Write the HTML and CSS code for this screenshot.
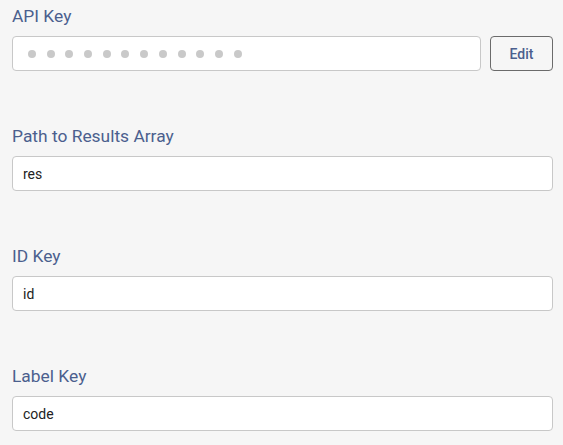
FILE: index.html
```html
<!DOCTYPE html>
<html>
<head>
<meta charset="utf-8">
<link rel="stylesheet" href="styles.css">
</head>
<body>
<div class="form">
  <div class="field">
    <label class="label">API Key</label>
    <div class="row">
      <div class="input masked">
        <span class="dot"></span><span class="dot"></span><span class="dot"></span><span class="dot"></span><span class="dot"></span><span class="dot"></span><span class="dot"></span><span class="dot"></span><span class="dot"></span><span class="dot"></span><span class="dot"></span><span class="dot"></span>
      </div>
      <button class="btn">Edit</button>
    </div>
  </div>
  <div class="field">
    <label class="label">Path to Results Array</label>
    <div class="input">res</div>
  </div>
  <div class="field">
    <label class="label">ID Key</label>
    <div class="input">id</div>
  </div>
  <div class="field">
    <label class="label">Label Key</label>
    <div class="input">code</div>
  </div>
</div>
</body>
</html>
```
FILE: styles.css
```css
html, body {
  margin: 0;
  padding: 0;
  background: #f6f6f6;
}
body {
  font-family: Roboto, "Liberation Sans", sans-serif;
}
.form {
  padding: 4px 10px 0 12px;
  display: flex;
  flex-direction: column;
  gap: 53px;
}
.field {
  display: flex;
  flex-direction: column;
  gap: 8px;
}
.label {
  display: block;
  font-size: 17.4px;
  line-height: 24px;
  color: #4b5f8e;
}
.row {
  display: flex;
  gap: 9px;
}
.row .input {
  flex: 1;
}
.input {
  box-sizing: border-box;
  height: 35px;
  flex: none;
  background: #fff;
  border: 1px solid #c8c8c8;
  border-radius: 4px;
  padding: 0 10px;
  display: flex;
  align-items: center;
  font-size: 14px;
  color: #222;
}
.masked {
  padding-left: 15px;
  gap: 10.7px;
}
.dot {
  width: 8px;
  height: 8px;
  border-radius: 50%;
  background: #c9c9c9;
}
.btn {
  box-sizing: border-box;
  width: 63px;
  height: 35px;
  border: 1px solid #6b6b6b;
  border-radius: 4px;
  background: #f6f6f6;
  color: #4b5f8e;
  font-family: Roboto, "Liberation Sans", sans-serif;
  font-weight: 500;
  font-size: 14px;
  padding: 0;
}
```
